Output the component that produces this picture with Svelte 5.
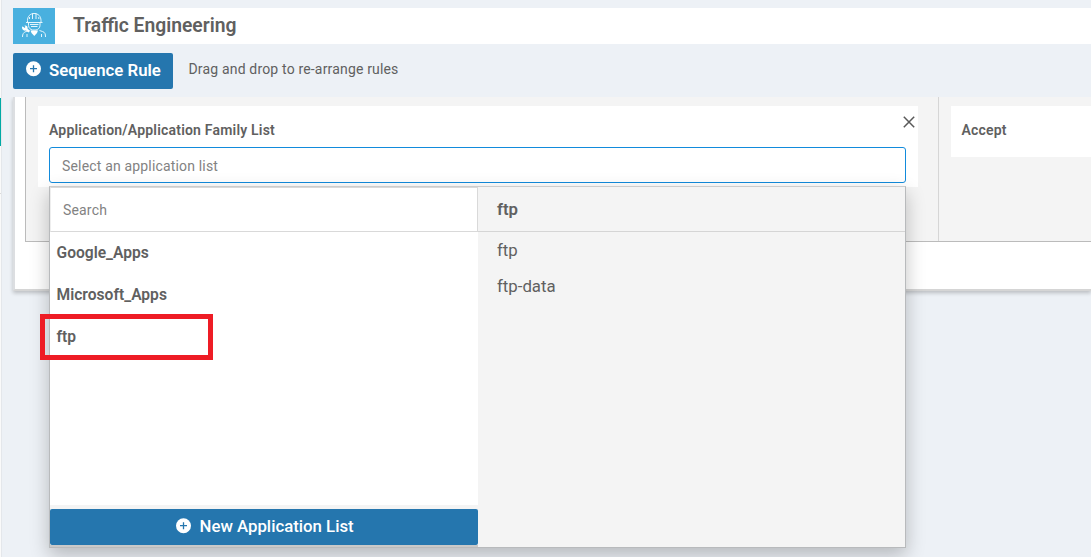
<script>
  let query = $state('');
  let selection = $state('');
  const lists = [
    { name: 'Google_Apps', apps: [] },
    { name: 'Microsoft_Apps', apps: [] },
    { name: 'ftp', apps: ['ftp', 'ftp-data'] }
  ];
  const active = lists[2];
</script>

{#snippet plus()}
  <svg class="plus" viewBox="0 0 16 16" width="16" height="16">
    <circle cx="7.5" cy="7.7" r="7.5" fill="#fff" />
    <path d="M7.500 4.200v7M4 7.700h7" stroke="#2576ae" stroke-width="1.300" fill="none" />
  </svg>
{/snippet}

<div class="screen">
  <aside class="rail"><i class="current"></i><i class="rule"></i></aside>
  <main>
    <header>
      <div class="logo">
        <svg viewBox="0 0 42 36" width="42" height="36" fill="none" stroke="#e4f5fc" stroke-width="1">
          <path d="M13 14.500h16.500M14.500 14v-1.500c0-4 2.500-7 6.700-7s6.800 3 6.800 7V14M19.500 11V5.500h3.500V11M16.500 9v2M25.800 9v2" />
          <path d="M15.500 15v2.500c0 2.500 2 4 4 4.500h3.500c2-.5 4-2 4-4.500V15M17 16.500h8.500M18 18.500h6.500M16.500 22.500l-3.500 1c-2.500.8-3.500 2.500-3.500 5.500M26.500 22.500l3 1c2.500.8 3 2.500 3 5.500M14 26v3M28.500 26v3" />
          <path d="M17.500 22.500h7.500l-1 2.500-2.700 3-2.800-3z" fill="#fff" stroke="none" />
          <path d="M9 18.500l1.500.5 1 1 1-1-1-1.500c2-.3 3.500 1 3 3l2.500 2.500-1.500 1.500-2.500-2c-2.500.7-4.300-1-4-4z" fill="#fff" stroke="none" />
        </svg>
      </div>
      <h1>Traffic Engineering</h1>
    </header>

    <div class="toolbar">
      <button class="seq">{@render plus()}<span>Sequence Rule</span></button>
      <span class="hint">Drag and drop to re-arrange rules</span>
    </div>

    <section class="card">
      <div class="panel">
        <div class="match">
          <div class="field">
            <div class="field-head">
              <label for="app-list">Application/Application Family List</label>
              <svg class="close" viewBox="0 0 12 12" width="12" height="12">
                <path d="M.8.8l10.400 10.400M11.200.8L.8 11.200" stroke="#595959" stroke-width="1.500" />
              </svg>
            </div>
            <div class="select">
              <input id="app-list" placeholder="Select an application list" bind:value={selection} />
              <div class="menu">
                <div class="lists">
                  <input class="search" placeholder="Search" bind:value={query} />
                  <ul>
                    {#each lists as list}
                      <li>{list.name}</li>
                    {/each}
                  </ul>
                  <button class="new">{@render plus()}<span>New Application List</span></button>
                </div>
                <div class="details">
                  <h2>{active.name}</h2>
                  {#each active.apps as app}
                    <p>{app}</p>
                  {/each}
                </div>
                <div class="marker"></div>
              </div>
            </div>
          </div>
        </div>
        <div class="action"><div class="accept">Accept</div></div>
      </div>
    </section>
  </main>
</div>

<style>
  :global(body) { margin: 0; overflow: hidden; }
  .screen, .screen * { box-sizing: border-box; }
  .screen {
    display: flex;
    width: 1091px;
    height: 557px;
    overflow: hidden;
    background: #edf1f6;
    color: #606060;
    font-family: Roboto, sans-serif;
    font-size: 14px;
  }
  .rail {
    width: 2px;
    flex: none;
    background: #fafafa;
    border-right: 1px solid #e4e7eb;
    padding-top: 98px;
  }
  .rail i { display: block; width: 1px; }
  .current { height: 48px; background: #00a9a5; }
  .rule { height: 1px; margin-top: 47px; background: #d9d9d9; }
  main { flex: 1; min-width: 0; padding: 8px 0 0 11px; }
  header { display: flex; height: 36px; background: #fff; }
  .logo { width: 42px; height: 36px; background: #49b0df; }
  .logo svg, .plus { display: block; flex: none; }
  h1 { margin: 0 0 0 18px; font-size: 19.3px; line-height: 36px; font-weight: 600; }
  .toolbar { display: flex; margin-top: 9px; height: 36px; }
  button {
    display: flex;
    padding: 0;
    border: 0;
    border-radius: 2px;
    background: #2576ae;
    color: #fff;
    font-family: inherit;
  }
  .seq { width: 160px; padding: 8px 0 0 13px; gap: 7px; font-size: 16.8px; font-weight: 600; line-height: 19px; }
  .hint { margin-left: 15.500px; line-height: 33px; letter-spacing: .17px; }
  .card {
    height: 194px;
    margin-top: 8px;
    padding-left: 10px;
    background: #fff;
    border-left: 2px solid #dcdee1;
    border-bottom: 2px solid #d5d5d5;
    box-shadow: 0 2px 4px rgba(0, 0, 0, .22);
    clip-path: inset(0 0 -280px -12px);
  }
  .panel {
    display: flex;
    height: 145px;
    border-left: 1px solid #bbb;
    border-bottom: 1px solid #bbb;
    background: #f4f4f4;
  }
  .match { flex: none; width: 913px; padding: 9px 0 0 12px; border-right: 1px solid #d6d6d6; }
  .action { flex: 1; padding: 9px 0 0 12px; }
  .accept { height: 51px; padding-left: 10.500px; background: #fff; font-weight: 600; line-height: 49px; letter-spacing: .2px; }
  .field { width: 880px; height: 81px; padding: 9px 12px 0 11px; background: #fff; }
  .field-head { display: flex; justify-content: space-between; height: 32px; }
  label { font-weight: 600; line-height: 31px; letter-spacing: .2px; }
  .close { margin: .5px -8.500px 0 0; }
  .select { position: relative; }
  input { display: block; font-family: inherit; font-size: 14px; letter-spacing: .17px; outline: 0; color: #555; }
  input::placeholder { color: #828282; opacity: 1; }
  #app-list {
    width: 857px;
    height: 36px;
    padding: 1px 12px 0;
    border: 1px solid #128bdc;
    border-radius: 3px;
    background: #fff;
  }
  .menu {
    position: absolute;
    z-index: 1;
    top: 39px;
    left: 0;
    display: flex;
    width: 857px;
    height: 362px;
    border: 1px solid #b8babc;
    border-top-color: #ccc;
    background: #f4f4f4;
    box-shadow: 0 7px 18px rgba(0, 0, 0, .24);
  }
  .lists { width: 428px; display: flex; flex-direction: column; border-bottom: 2px solid #c9c9c9; }
  .search { width: 428px; height: 45px; padding: 1px 12px 0; border: 1px solid #d9d9d9; border-left-color: #eee; border-radius: 0; background: #fff; }
  ul { height: 273px; margin: 0; padding: 0; list-style: none; background: #fff; }
  li { height: 42px; padding-left: 6.500px; line-height: 42px; font-size: 15.6px; font-weight: 600; }
  .new { height: 36px; margin-top: 4px; padding: 9px 0 0 125.500px; gap: 8px; font-size: 16.8px; font-weight: 500; line-height: 17px; }
  .details { flex: 1; font-size: 16.8px; }
  h2 { height: 45px; margin: 0; padding-left: 19px; border-bottom: 1px solid #d5d5d5; font-size: 16.8px; font-weight: 600; line-height: 45px; }
  .details p { height: 36px; margin: 0; padding-left: 19px; line-height: 36px; }
  .marker {
    position: absolute;
    left: -10px;
    top: 127px;
    width: 173px;
    height: 46px;
    border: 5px solid #ee1c25;
  }
</style>
